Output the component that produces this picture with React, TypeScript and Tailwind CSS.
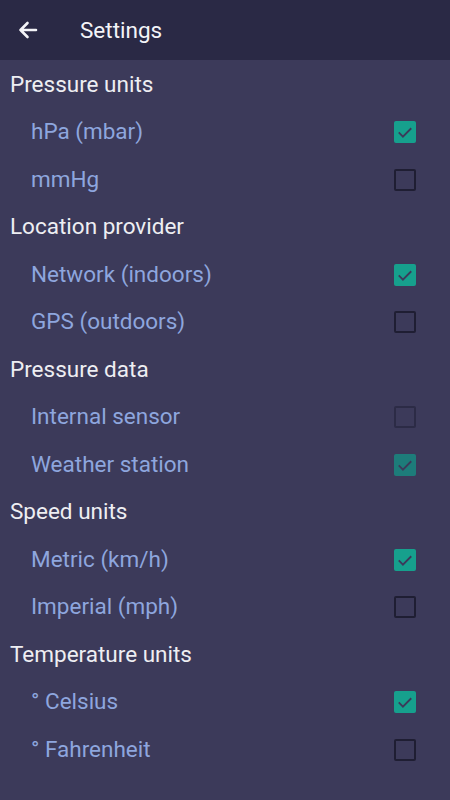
import React from 'react';

interface Option {
  label: string;
  checked: boolean;
}

interface Section {
  title: string;
  disabled?: boolean;
  options: Option[];
}

const sections: Section[] = [
  { title: 'Pressure units', options: [{ label: 'hPa (mbar)', checked: true }, { label: 'mmHg', checked: false }] },
  { title: 'Location provider', options: [{ label: 'Network (indoors)', checked: true }, { label: 'GPS (outdoors)', checked: false }] },
  { title: 'Pressure data', disabled: true, options: [{ label: 'Internal sensor', checked: false }, { label: 'Weather station', checked: true }] },
  { title: 'Speed units', options: [{ label: 'Metric (km/h)', checked: true }, { label: 'Imperial (mph)', checked: false }] },
  { title: 'Temperature units', options: [{ label: '° Celsius', checked: true }, { label: '° Fahrenheit', checked: false }] },
];

function Checkbox({ checked, disabled }: { checked: boolean; disabled?: boolean }) {
  if (checked) {
    return (
      <div className={`w-[22px] h-[22px] rounded-[2px] flex items-center justify-center ${disabled ? 'bg-[#1d7c7a]' : 'bg-[#16a08d]'}`}>
        <svg width="20" height="20" viewBox="0 0 24 24" fill="none">
          <path d="M4.5 12.5l5 5L19.5 7.5" stroke="#3c3a5a" strokeWidth="2.2" />
        </svg>
      </div>
    );
  }
  return (
    <div className={`w-[22px] h-[22px] rounded-[2px] border-2 ${disabled ? 'border-[#2c2b46]' : 'border-[#1f1e33]'}`} />
  );
}

export default function App() {
  return (
    <div className="w-[450px] h-[800px] bg-[#3c3a5a] flex flex-col" style={{ fontFamily: 'Roboto, "Noto Sans", sans-serif' }}>
      <div className="h-[60px] bg-[#2a2945] flex items-center shrink-0">
        <svg className="ml-4" width="24" height="24" viewBox="0 0 24 24" fill="none">
          <path d="M20 12H4.5M11.5 5l-7 7 7 7" stroke="#f4f4f8" strokeWidth="2.6" strokeLinecap="round" strokeLinejoin="round" />
        </svg>
        <span className="ml-10 text-[22.5px] text-[#f4f4f8] leading-none">Settings</span>
      </div>
      <div className="flex flex-col pt-[1px]">
        {sections.map((s) => (
          <div key={s.title} className="flex flex-col">
            <div className="h-[47.5px] flex items-center pl-[10px] text-[22.5px] text-[#eeeef2]">{s.title}</div>
            {s.options.map((o) => (
              <div key={o.label} className="h-[47.5px] flex items-center justify-between pl-[31px] pr-[34px]">
                <span className="text-[22.5px] text-[#8ea6de]">{o.label}</span>
                <Checkbox checked={o.checked} disabled={s.disabled} />
              </div>
            ))}
          </div>
        ))}
      </div>
    </div>
  );
}
